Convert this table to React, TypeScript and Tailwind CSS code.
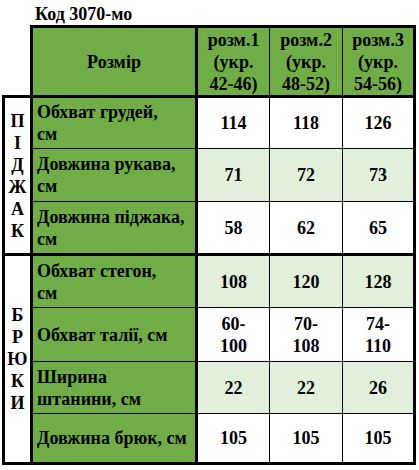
import React from 'react';

type Row = {
  label: React.ReactNode;
  values: React.ReactNode[];
  h: string;
  shade: boolean;
  last?: boolean;
};

const jacket: Row[] = [
  { label: <>Обхват грудей,<br />см</>, values: ['114', '118', '126'], h: 'h-[51px]', shade: false },
  { label: <>Довжина рукава,<br />см</>, values: ['71', '72', '73'], h: 'h-[53px]', shade: true },
  { label: <>Довжина піджака,<br />см</>, values: ['58', '62', '65'], h: 'h-[51px]', shade: false, last: true },
];

const trousers: Row[] = [
  { label: <>Обхват стегон,<br />см</>, values: ['108', '120', '128'], h: 'h-[52px]', shade: true },
  {
    label: 'Обхват талії, см',
    values: [<>60-<br />100</>, <>70-<br />108</>, <>74-<br />110</>],
    h: 'h-[54px]',
    shade: false,
  },
  { label: <>Ширина<br />штанини, см</>, values: ['22', '22', '26'], h: 'h-[52px]', shade: true },
  { label: 'Довжина брюк, см', values: ['105', '105', '105'], h: 'h-[48px]', shade: false, last: true },
];

const colW = ['w-[72px] border-r border-black', 'w-[73px] border-r border-black', 'w-[70px]'];

function TableRow({ row }: { row: Row }) {
  return (
    <div className={`flex ${row.h} ${row.last ? '' : 'border-b border-black'}`}>
      <div className="w-[165px] shrink-0 flex items-center pl-[4px] bg-[#70ad47] border-r-[3px] border-black">
        <span>{row.label}</span>
      </div>
      {row.values.map((v, i) => (
        <div
          key={i}
          className={`${colW[i]} shrink-0 flex items-center justify-center text-center ${row.shade ? 'bg-[#e2efda]' : 'bg-white'}`}
        >
          <span>{v}</span>
        </div>
      ))}
    </div>
  );
}

function Section({ letters, rows, top }: { letters: string[]; rows: Row[]; top?: boolean }) {
  return (
    <div className={`flex border-x-[3px] border-b-[3px] border-black ${top ? 'border-t-[3px]' : ''}`}>
      <div className="w-[28px] shrink-0 flex flex-col items-center justify-center border-r-[3px] border-black bg-white">
        {letters.map((l, i) => (
          <span key={i} className="leading-[22px]">{l}</span>
        ))}
      </div>
      <div className="flex flex-col flex-1">
        {rows.map((r, i) => (
          <TableRow key={i} row={r} />
        ))}
      </div>
    </div>
  );
}

export default function App() {
  return (
    <div className="w-[419px] h-[470px] bg-white font-['Liberation_Serif',serif] font-bold text-[18px] leading-[22px] text-black">
      <div className="w-[414px] ml-[2px]">
        <div className="h-[25px] pt-[3px] pl-[33px]">Код 3070-мо</div>

        {/* header */}
        <div className="ml-[28px] flex h-[70px] border-[3px] border-b-0 border-black">
          <div className="w-[165px] shrink-0 flex items-center justify-center bg-[#70ad47] border-r-[3px] border-black">
            Розмір
          </div>
          {['розм.1', 'розм.2', 'розм.3'].map((s, i) => (
            <div
              key={s}
              className={`${colW[i]} shrink-0 flex items-center justify-center text-center bg-[#70ad47]`}
            >
              <span>
                {s}
                <br />
                (укр.
                <br />
                {['42-46)', '48-52)', '54-56)'][i]}
              </span>
            </div>
          ))}
        </div>

        <Section letters={['П', 'І', 'Д', 'Ж', 'А', 'К']} rows={jacket} top />
        <Section letters={['Б', 'Р', 'Ю', 'К', 'И']} rows={trousers} />
      </div>
    </div>
  );
}
